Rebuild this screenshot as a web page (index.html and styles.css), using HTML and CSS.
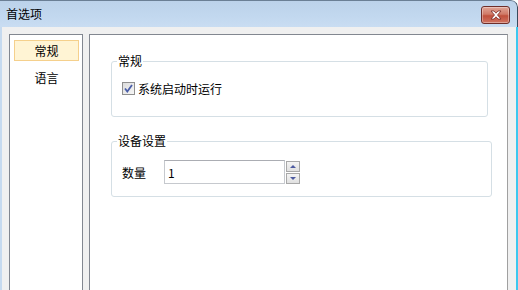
FILE: index.html
```html
<!DOCTYPE html>
<html>
<head>
    <title>首选项</title>
    <link rel="stylesheet" href="styles.css">
</head>
<body>
    <div class="window">
        <div class="titlebar">
            <span class="title">首选项</span>
            <button class="close" title="关闭">
                <svg width="16" height="10" viewBox="0 0 16 10">
                    <path d="M3 1h3l2 2.2L10 1h3l-3.5 4L13 9h-3L8 6.8 6 9H3l3.5-4z" fill="#fff" stroke="#7a2a24" stroke-width="0.8" stroke-linejoin="round"/>
                </svg>
            </button>
        </div>
        <div class="frame">
            <div class="nav">
                <div class="nav-item selected">常规</div>
                <div class="nav-item">语言</div>
            </div>
            <div class="content">
                <fieldset class="group group-general">
                    <legend>常规</legend>
                    <label class="check-row">
                        <span class="checkbox">
                            <svg width="9" height="9" viewBox="0 0 9 9">
                                <path d="M1 4.5l2.3 3L8 1" fill="none" stroke="#4a5ea8" stroke-width="1.8"/>
                            </svg>
                        </span>
                        系统启动时运行
                    </label>
                </fieldset>
                <fieldset class="group group-device">
                    <legend>设备设置</legend>
                    <div class="field-row">
                        <span class="field-label">数量</span>
                        <input class="num-input" type="text" value="1">
                        <div class="spin">
                            <button class="spin-btn"><span class="tri-up"></span></button>
                            <button class="spin-btn"><span class="tri-down"></span></button>
                        </div>
                    </div>
                </fieldset>
            </div>
        </div>
    </div>
</body>
</html>
```

FILE: styles.css
```css
html, body { margin: 0; padding: 0; }
body { width: 518px; height: 290px; overflow: hidden; font-family: "Noto Sans CJK SC", "Microsoft YaHei", sans-serif; font-size: 12px; color: #000; background: #fff; }

.window { height: 290px; display: flex; flex-direction: column; border-top-right-radius: 7px; overflow: hidden; background: #f0f0f0; }
.titlebar { height: 27px; flex: none; display: flex; align-items: center; justify-content: space-between; padding: 0 7px 0 6px; background: linear-gradient(#bcd2ea, #c2d8ef 60%, #c9ddf2); border-top: 1px solid #6b7f95; border-right: 1px solid #3a4a5c; border-top-right-radius: 7px; box-sizing: border-box; }
.title { font-size: 12px; color: #000; line-height: 1; }
.close { width: 29px; height: 18px; margin-top: 1px; padding: 0; border: 1px solid #6e2e2a; border-radius: 3px; background: linear-gradient(#e0a597, #d07a67 45%, #c0503c 55%, #d07462); display: flex; align-items: center; justify-content: center; box-shadow: inset 0 0 0 1px rgba(255,255,255,0.35); }

.frame { flex: 1; display: flex; gap: 6px; padding: 7px 8px 0 7px; border-left: 2px solid #c6daef; border-right: 2px solid #3cc8f0; }

.nav { width: 74px; box-sizing: border-box; flex: none; border: 1px solid #828790; border-bottom: none; background: #fff; padding: 5px 0 0 4px; display: flex; flex-direction: column; gap: 6px; }
.nav-item { width: 63px; height: 19px; display: flex; align-items: center; justify-content: center; border: 1px solid transparent; }
.nav-item.selected { background: #fff4d4; border-color: #f5d08c; }

.content { flex: 1; border: 1px solid #828790; border-right-color: #a0a0a0; border-bottom: none; background: #fff; padding: 19px 0 0 21px; }

.group { margin: 0; padding: 0; border: 1px solid #d5dfe5; border-radius: 3px; height: 63px; box-sizing: border-box; }
.group legend { margin-left: 5px; padding: 0 1px; line-height: 14px; font-size: 12px; }
.group-general { width: 377px; }
.group-device { width: 381px; margin-top: 17px; }

.check-row { display: flex; align-items: center; gap: 3px; padding: 12px 0 0 10px; }
.checkbox { width: 11px; height: 11px; border: 1px solid #8f8f8f; background: linear-gradient(135deg, #dcdcdc, #f6f6f6); display: flex; align-items: center; justify-content: center; }

.field-row { display: flex; align-items: center; padding: 12px 0 0 10px; }
.field-label { width: 42px; }
.num-input { width: 121px; height: 24px; box-sizing: border-box; border: 1px solid #c6c9ce; border-top-color: #abadb3; padding: 0 3px; font-family: "Noto Sans CJK SC", sans-serif; font-size: 12px; outline: none; }
.spin { display: flex; flex-direction: column; gap: 1px; margin-left: 1px; }
.spin-btn { width: 14px; height: 11px; padding: 0; border: 1px solid #a8a8a8; background: linear-gradient(#f4f4f4, #e0e0e0); display: flex; align-items: center; justify-content: center; }
.tri-up { width: 0; height: 0; border-left: 3px solid transparent; border-right: 3px solid transparent; border-bottom: 3px solid #4d5aa0; }
.tri-down { width: 0; height: 0; border-left: 3px solid transparent; border-right: 3px solid transparent; border-top: 3px solid #4d5aa0; }
```
